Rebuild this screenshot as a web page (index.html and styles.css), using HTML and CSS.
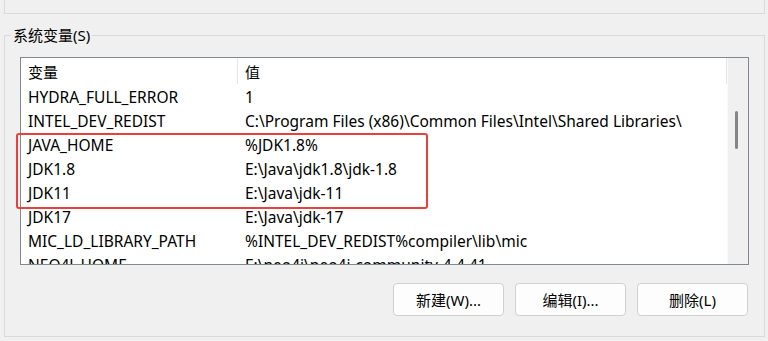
FILE: index.html
```html
<!DOCTYPE html>
<html lang="zh-CN">
<head>
    <meta charset="UTF-8">
    <meta name="viewport" content="width=device-width, initial-scale=1.0">
    <title>环境变量</title>
    <link rel="stylesheet" href="styles.css">
</head>
<body>
    <!-- bottom edge of the user variables group above -->
    <div class="top-panel"></div>

    <fieldset class="group">
        <legend>系统变量(S)</legend>

        <div class="listbox">
            <div class="list-body">
                <div class="list-head">
                    <div class="head-cell">变量</div>
                    <div class="head-cell">值</div>
                </div>
                <div class="row"><span>HYDRA_FULL_ERROR</span><span>1</span></div>
                <div class="row"><span>INTEL_DEV_REDIST</span><span>C:\Program Files (x86)\Common Files\Intel\Shared Libraries\</span></div>
                <div class="row"><span>JAVA_HOME</span><span>%JDK1.8%</span></div>
                <div class="row"><span>JDK1.8</span><span>E:\Java\jdk1.8\jdk-1.8</span></div>
                <div class="row"><span>JDK11</span><span>E:\Java\jdk-11</span></div>
                <div class="row"><span>JDK17</span><span>E:\Java\jdk-17</span></div>
                <div class="row"><span>MIC_LD_LIBRARY_PATH</span><span>%INTEL_DEV_REDIST%compiler\lib\mic</span></div>
                <div class="row"><span>NEO4J_HOME</span><span>E:\neo4j\neo4j-community-4.4.41</span></div>
            </div>
            <div class="scrollbar">
                <div class="thumb"></div>
            </div>
            <!-- red annotation box over the java rows -->
            <div class="highlight"></div>
        </div>

        <div class="actions">
            <button class="btn">新建(W)...</button>
            <button class="btn">编辑(I)...</button>
            <button class="btn">删除(L)</button>
        </div>
    </fieldset>
</body>
</html>
```

FILE: styles.css
```css
body {
    margin: 0;
    background-color: #f0f0f0;
    color: #000;
    font-family: "Noto Sans", "Noto Sans CJK SC", sans-serif;
    font-size: 15px;
}
.top-panel {
    height: 13px;
    margin: 0 3px 0 4px;
    border: 1px solid #dadada;
    border-top: none;
}
.group {
    margin: 11px 3px 0 4px;
    padding: 12px 15px 20px;
    border: 1px solid #dadada;
    min-width: 0;
}
.group legend {
    margin-left: -9px;
    padding: 0 2px;
    line-height: 20px;
}
.listbox {
    position: relative;
    display: flex;
    height: 206px;
    border: 1px solid #828790;
    background-color: #fff;
}
.list-body {
    flex: 1;
    overflow: hidden;
    font-size: 15.5px;
}
.list-head {
    display: grid;
    grid-template-columns: 217px 1fr;
    height: 27px;
    font-size: 15px;
}
.head-cell {
    display: flex;
    align-items: center;
    padding-left: 7px;
    border-right: 1px solid #e5e5e5;
    margin-bottom: 1px;
}
.row {
    display: grid;
    grid-template-columns: 217px 1fr;
    height: 24px;
    align-items: center;
    white-space: nowrap;
}
.row span {
    padding-left: 7px;
}
.scrollbar {
    position: relative;
    width: 20px;
    background-color: #f0f0f0;
    border-left: 1px solid #fafafa;
}
.thumb {
    position: absolute;
    left: 7px;
    top: 53px;
    width: 3px;
    height: 38px;
    border-radius: 2px;
    background-color: #858585;
}
.highlight {
    position: absolute;
    left: -5px;
    top: 75px;
    width: 408px;
    height: 72px;
    border: 2px solid #e83f3f;
    border-radius: 3px;
}
.actions {
    display: flex;
    justify-content: flex-end;
    gap: 11px;
    margin-top: 18px;
    padding-right: 1px;
}
.btn {
    width: 111px;
    height: 33px;
    background-color: #fdfdfd;
    border: 1px solid #d0d0d0;
    border-radius: 4px;
    font-family: inherit;
    font-size: 15px;
    color: #000;
}
```
